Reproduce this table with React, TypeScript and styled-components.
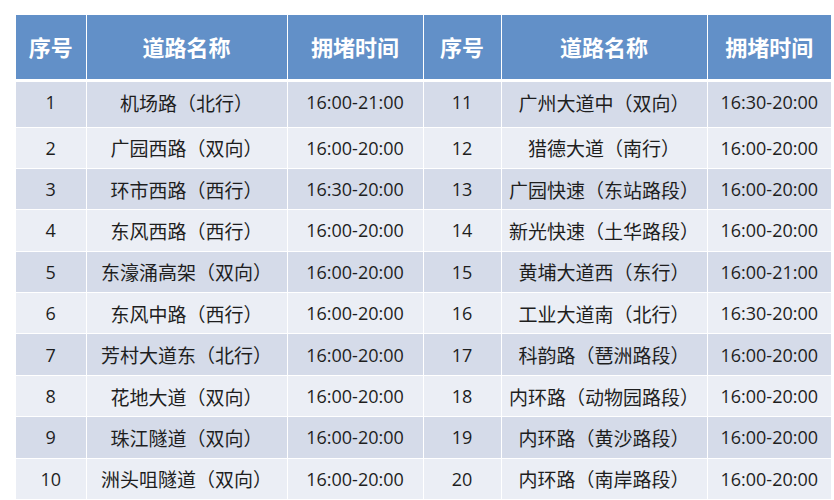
import React from "react";
import styled, { createGlobalStyle } from "styled-components";

const Global = createGlobalStyle`
  html, body { margin: 0; padding: 0; background: #ffffff; }
  body { font-family: "Open Sans", "Noto Sans CJK SC", sans-serif; }
`;

const Page = styled.div`
  padding: 15px 0 0 16px;
  width: 834px;
  height: 500px;
  box-sizing: border-box;
  overflow: hidden;
`;

const Table = styled.table`
  border-collapse: collapse;
  table-layout: fixed;
  width: 815px;
`;

const HeadCell = styled.th`
  height: 65px;
  padding: 0 0 2px 0;
  background: #6290c8;
  color: #ffffff;
  font-family: "Noto Sans CJK SC", sans-serif;
  font-weight: 700;
  font-size: 22px;
  text-align: center;
  border-left: 1px solid #ffffff;
  border-right: 1px solid #ffffff;
  border-bottom: 3px solid #ffffff;
  box-sizing: border-box;
  &:first-child { border-left: none; }
  &:last-child { border-right: none; }
`;

const Row = styled.tr<{ $odd: boolean; $first: boolean }>`
  height: ${(p) => (p.$first ? 47 : 41.4)}px;
  background: ${(p) => (p.$odd ? "#d5dbe9" : "#ebeef5")};
`;

const Cell = styled.td<{ $cjk?: boolean; $first?: boolean }>`
  padding: 0 0 ${(p) => (p.$first ? 4 : 0)}px 0;
  text-align: center;
  color: #1e1e1e;
  font-family: ${(p) =>
    p.$cjk ? `"Noto Sans CJK SC", sans-serif` : `"Open Sans", "Noto Sans CJK SC", sans-serif`};
  font-size: ${(p) => (p.$cjk ? 19 : 18)}px;
  border: 1px solid #ffffff;
  white-space: nowrap;
  &:first-child { border-left: none; }
  &:last-child { border-right: none; }
`;

const left = [
  ["1", "机场路（北行）", "16:00-21:00"],
  ["2", "广园西路（双向）", "16:00-20:00"],
  ["3", "环市西路（西行）", "16:30-20:00"],
  ["4", "东风西路（西行）", "16:00-20:00"],
  ["5", "东濠涌高架（双向）", "16:00-20:00"],
  ["6", "东风中路（西行）", "16:00-20:00"],
  ["7", "芳村大道东（北行）", "16:00-20:00"],
  ["8", "花地大道（双向）", "16:00-20:00"],
  ["9", "珠江隧道（双向）", "16:00-20:00"],
  ["10", "洲头咀隧道（双向）", "16:00-20:00"],
];

const right = [
  ["11", "广州大道中（双向）", "16:30-20:00"],
  ["12", "猎德大道（南行）", "16:00-20:00"],
  ["13", "广园快速（东站路段）", "16:00-20:00"],
  ["14", "新光快速（土华路段）", "16:00-20:00"],
  ["15", "黄埔大道西（东行）", "16:00-21:00"],
  ["16", "工业大道南（北行）", "16:30-20:00"],
  ["17", "科韵路（琶洲路段）", "16:00-20:00"],
  ["18", "内环路（动物园路段）", "16:00-20:00"],
  ["19", "内环路（黄沙路段）", "16:00-20:00"],
  ["20", "内环路（南岸路段）", "16:00-20:00"],
];

const widths = [70, 201, 136, 78, 206, 124];
const heads = ["序号", "道路名称", "拥堵时间", "序号", "道路名称", "拥堵时间"];

export default function App() {
  return (
    <>
      <Global />
      <Page>
        <Table>
          <colgroup>
            {widths.map((w, i) => (
              <col key={i} style={{ width: w }} />
            ))}
          </colgroup>
          <thead>
            <tr>
              {heads.map((h, i) => (
                <HeadCell key={i}>{h}</HeadCell>
              ))}
            </tr>
          </thead>
          <tbody>
            {left.map((l, i) => {
              const r = right[i];
              const f = i === 0;
              return (
                <Row key={i} $odd={i % 2 === 0} $first={f}>
                  <Cell $first={f}>{l[0]}</Cell>
                  <Cell $cjk $first={f}>{l[1]}</Cell>
                  <Cell $first={f}>{l[2]}</Cell>
                  <Cell $first={f}>{r[0]}</Cell>
                  <Cell $cjk $first={f}>{r[1]}</Cell>
                  <Cell $first={f}>{r[2]}</Cell>
                </Row>
              );
            })}
          </tbody>
        </Table>
      </Page>
    </>
  );
}
